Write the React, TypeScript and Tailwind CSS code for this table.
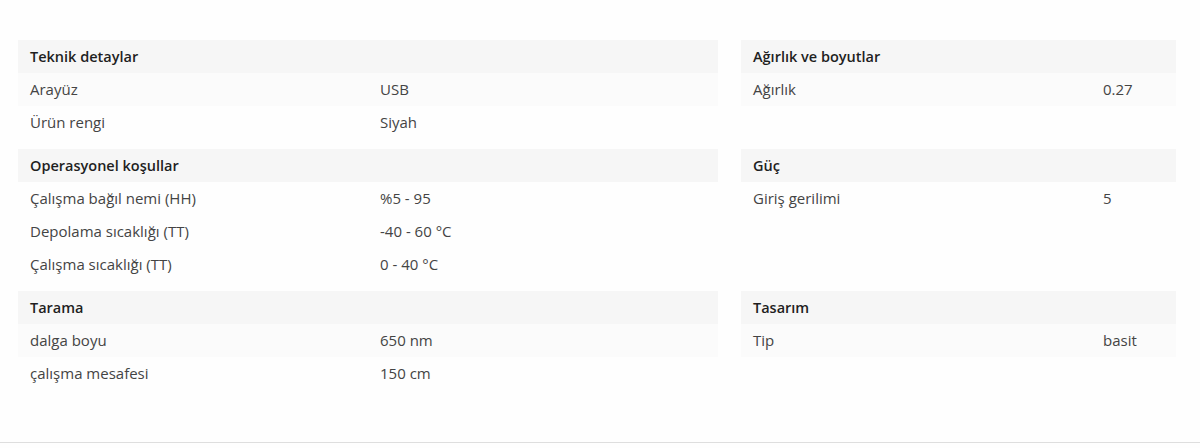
import React from 'react';

type Row = { label: string; value: string; tint?: boolean };
type Section = { title: string; rows: Row[] };

const left: Section[] = [
  {
    title: 'Teknik detaylar',
    rows: [
      { label: 'Arayüz', value: 'USB', tint: true },
      { label: 'Ürün rengi', value: 'Siyah' },
    ],
  },
  {
    title: 'Operasyonel koşullar',
    rows: [
      { label: 'Çalışma bağıl nemi (HH)', value: '%5 - 95' },
      { label: 'Depolama sıcaklığı (TT)', value: '-40 - 60 °C' },
      { label: 'Çalışma sıcaklığı (TT)', value: '0 - 40 °C' },
    ],
  },
  {
    title: 'Tarama',
    rows: [
      { label: 'dalga boyu', value: '650 nm', tint: true },
      { label: 'çalışma mesafesi', value: '150 cm' },
    ],
  },
];

const right: Section[] = [
  { title: 'Ağırlık ve boyutlar', rows: [{ label: 'Ağırlık', value: '0.27', tint: true }] },
  { title: 'Güç', rows: [{ label: 'Giriş gerilimi', value: '5' }] },
  { title: 'Tasarım', rows: [{ label: 'Tip', value: 'basit', tint: true }] },
];

const SpecTable: React.FC<{ section: Section }> = ({ section }) => (
  <div className="flex flex-col">
    <div className="h-[33px] flex items-center px-3 bg-[#f6f6f6] text-[14.5px] font-semibold text-[#1f1f1f]">
      {section.title}
    </div>
    {section.rows.map((r, i) => (
      <div
        key={i}
        className={`h-[33px] flex items-center text-[15px] text-[#444] ${r.tint ? 'bg-[#fbfbfb]' : ''}`}
      >
        <div className="w-[350px] shrink-0 px-3">{r.label}</div>
        <div className="px-3">{r.value}</div>
      </div>
    ))}
  </div>
);

export default function App() {
  return (
    <div
      className="w-[1200px] h-[448px] bg-[#fefefe]"
      style={{ fontFamily: '"Open Sans", "Noto Sans", sans-serif' }}
    >
      <div className="h-[443px] border-b border-[#dedede] pt-[40px] px-[18px]">
        <div className="grid grid-cols-[700px_435px] gap-x-[23px] gap-y-[10px] items-start">
          {left.map((s, i) => (
            <React.Fragment key={i}>
              <SpecTable section={s} />
              <SpecTable section={right[i]} />
            </React.Fragment>
          ))}
        </div>
      </div>
    </div>
  );
}
